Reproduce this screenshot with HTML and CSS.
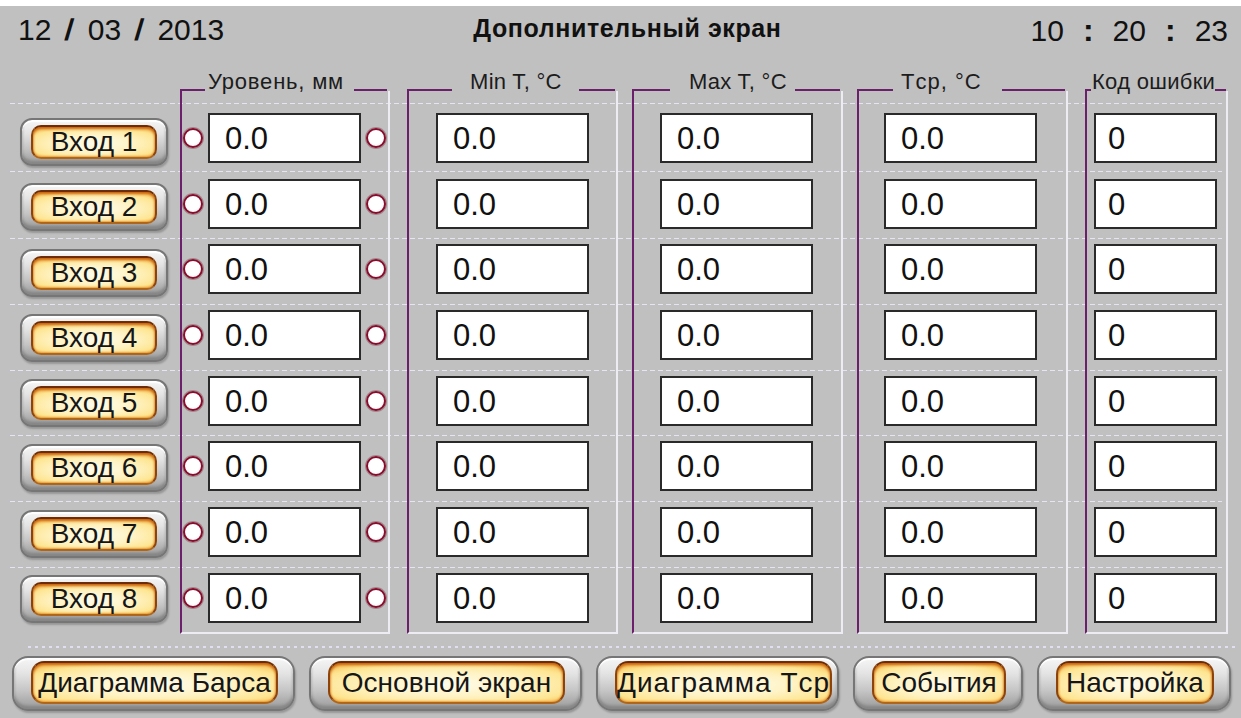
FILE: index.html
```html
<!DOCTYPE html>
<html lang="ru">
<head>
<meta charset="utf-8">
<title>Дополнительный экран</title>
<link rel="stylesheet" href="styles.css">
</head>
<body>
<div class="screen">
  <header class="top">
    <div class="date"><span>12</span><b class="sep">/</b><span>03</span><b class="sep">/</b><span>2013</span></div>
    <h1 class="title">Дополнительный экран</h1>
    <div class="clock"><span>10</span><b class="colon">:</b><span>20</span><b class="colon">:</b><span>23</span></div>
  </header>

  <main class="table">
    <div class="inputs">
      <button class="btn small"><span class="pill">Вход 1</span></button>
      <button class="btn small"><span class="pill">Вход 2</span></button>
      <button class="btn small"><span class="pill">Вход 3</span></button>
      <button class="btn small"><span class="pill">Вход 4</span></button>
      <button class="btn small"><span class="pill">Вход 5</span></button>
      <button class="btn small"><span class="pill">Вход 6</span></button>
      <button class="btn small"><span class="pill">Вход 7</span></button>
      <button class="btn small"><span class="pill">Вход 8</span></button>
    </div>

    <section class="group g-level">
      <div class="cap"><i class="seg"></i><span class="label">Уровень, мм</span><i class="seg fill"></i></div>
      <div class="frame">
        <div class="row"><i class="led"></i><span class="val">0.0</span><i class="led"></i></div>
        <div class="row"><i class="led"></i><span class="val">0.0</span><i class="led"></i></div>
        <div class="row"><i class="led"></i><span class="val">0.0</span><i class="led"></i></div>
        <div class="row"><i class="led"></i><span class="val">0.0</span><i class="led"></i></div>
        <div class="row"><i class="led"></i><span class="val">0.0</span><i class="led"></i></div>
        <div class="row"><i class="led"></i><span class="val">0.0</span><i class="led"></i></div>
        <div class="row"><i class="led"></i><span class="val">0.0</span><i class="led"></i></div>
        <div class="row"><i class="led"></i><span class="val">0.0</span><i class="led"></i></div>
      </div>
    </section>

    <section class="group g-min">
      <div class="cap"><i class="seg"></i><span class="label">Min T, °C</span><i class="seg fill"></i></div>
      <div class="frame">
        <div class="row"><span class="val">0.0</span></div>
        <div class="row"><span class="val">0.0</span></div>
        <div class="row"><span class="val">0.0</span></div>
        <div class="row"><span class="val">0.0</span></div>
        <div class="row"><span class="val">0.0</span></div>
        <div class="row"><span class="val">0.0</span></div>
        <div class="row"><span class="val">0.0</span></div>
        <div class="row"><span class="val">0.0</span></div>
      </div>
    </section>

    <section class="group g-max">
      <div class="cap"><i class="seg"></i><span class="label">Max T, °C</span><i class="seg fill"></i></div>
      <div class="frame">
        <div class="row"><span class="val">0.0</span></div>
        <div class="row"><span class="val">0.0</span></div>
        <div class="row"><span class="val">0.0</span></div>
        <div class="row"><span class="val">0.0</span></div>
        <div class="row"><span class="val">0.0</span></div>
        <div class="row"><span class="val">0.0</span></div>
        <div class="row"><span class="val">0.0</span></div>
        <div class="row"><span class="val">0.0</span></div>
      </div>
    </section>

    <section class="group g-avg">
      <div class="cap"><i class="seg"></i><span class="label">Tср, °C</span><i class="seg fill"></i></div>
      <div class="frame">
        <div class="row"><span class="val">0.0</span></div>
        <div class="row"><span class="val">0.0</span></div>
        <div class="row"><span class="val">0.0</span></div>
        <div class="row"><span class="val">0.0</span></div>
        <div class="row"><span class="val">0.0</span></div>
        <div class="row"><span class="val">0.0</span></div>
        <div class="row"><span class="val">0.0</span></div>
        <div class="row"><span class="val">0.0</span></div>
      </div>
    </section>

    <section class="group g-err">
      <div class="cap"><i class="seg"></i><span class="label">Код ошибки</span><i class="seg fill"></i></div>
      <div class="frame">
        <div class="row"><span class="val">0</span></div>
        <div class="row"><span class="val">0</span></div>
        <div class="row"><span class="val">0</span></div>
        <div class="row"><span class="val">0</span></div>
        <div class="row"><span class="val">0</span></div>
        <div class="row"><span class="val">0</span></div>
        <div class="row"><span class="val">0</span></div>
        <div class="row"><span class="val">0</span></div>
      </div>
    </section>
  </main>

  <div class="divider"></div>

  <nav class="bottom">
    <button class="btn big b-bars"><span class="pill">Диаграмма Барса</span></button>
    <button class="btn big b-main"><span class="pill">Основной экран</span></button>
    <button class="btn big b-avg"><span class="pill">Диаграмма Tср</span></button>
    <button class="btn big b-events"><span class="pill">События</span></button>
    <button class="btn big b-setup"><span class="pill">Настройка</span></button>
  </nav>
</div>
</body>
</html>
```

FILE: styles.css
```css
* { box-sizing: border-box; }

body {
  margin: 0;
  background: #ffffff;
  font-family: "Liberation Sans", Arial, sans-serif;
  color: #141414;
}

.screen {
  margin-top: 6px;
  height: 712px;
  background: #c0c0c0;
  display: flex;
  flex-direction: column;
}

/* ---------- header: date, title, clock ---------- */
.top {
  height: 64px;
  display: flex;
  justify-content: space-between;
  align-items: flex-start;
  padding: 7px 13px 0 18px;
}

.date, .clock {
  display: flex;
  align-items: baseline;
  font-size: 30px;
  line-height: 34px;
  color: #111;
}

.date { gap: 14px; }
.clock { gap: 19px; }

.sep { font-weight: bold; transform: skewX(-6deg); }
.colon { font-weight: 900; font-size: 32px; }

.title {
  margin: 0;
  font-size: 25px;
  font-weight: bold;
  line-height: 28px;
  letter-spacing: 0.6px;
  padding-top: 1px;
  color: #111;
}

/* ---------- measurement table ---------- */
.table {
  height: 564px;
  display: flex;
  padding-left: 20px;
  background-image:
    repeating-linear-gradient(to right, #e6e4f0 0 5px, transparent 5px 8px),
    repeating-linear-gradient(to right, #e6e4f0 0 5px, transparent 5px 8px),
    repeating-linear-gradient(to right, #e6e4f0 0 5px, transparent 5px 8px),
    repeating-linear-gradient(to right, #e6e4f0 0 5px, transparent 5px 8px),
    repeating-linear-gradient(to right, #e6e4f0 0 5px, transparent 5px 8px),
    repeating-linear-gradient(to right, #e6e4f0 0 5px, transparent 5px 8px),
    repeating-linear-gradient(to right, #e6e4f0 0 5px, transparent 5px 8px),
    repeating-linear-gradient(to right, #e6e4f0 0 5px, transparent 5px 8px);
  background-size: 1212px 1px;
  background-repeat: no-repeat;
  background-position:
    10px 33px, 10px 101px, 10px 168px, 10px 234px,
    10px 300px, 10px 365px, 10px 431px, 10px 497px;
}

.inputs {
  width: 148px;
  margin-right: 12px;
  padding-top: 48px;
  display: flex;
  flex-direction: column;
  gap: 17.3px;
}

.group {
  display: flex;
  flex-direction: column;
  width: 211px;
}

.g-level { width: 210px; }
.g-min { margin-left: 17px; }
.g-max, .g-avg { margin-left: 14px; }
.g-err { margin-left: 17px; width: 143px; }

/* caption sitting on the top edge of the frame */
.cap {
  height: 21px;
  display: flex;
  align-items: flex-end;
}

.seg {
  display: block;
  height: 2px;
  background: #6c1f6a;
}

.seg.fill { flex: 1; margin-right: 3px; }

.label {
  font-size: 22px;
  line-height: 18px;
  color: #1c1c1c;
  white-space: nowrap;
  letter-spacing: 0.3px;
}

.g-level .seg:first-child { width: 25px; }
.g-level .label { padding: 0 10px 0 3px; letter-spacing: 0.8px; }

.g-min .seg:first-child { width: 45px; }
.g-min .label { padding: 0 17px 0 18px; }

.g-max .seg:first-child { width: 38px; }
.g-max .label { padding: 0 8px 0 19px; }

.g-avg .seg:first-child { width: 36px; }
.g-avg .label { padding: 0 20px 0 8px; letter-spacing: 1px; }

.g-err .seg:first-child { width: 6px; }
.g-err .label { padding: 0 0 0 1px; }
.g-err .seg.fill { margin-right: 2px; }

.frame {
  flex: 1;
  border-left: 2px solid #6c1f6a;
  border-right: 2px solid #ececf2;
  border-bottom: 2px solid #ececf2;
  padding-top: 22px;
  display: flex;
  flex-direction: column;
  gap: 15.7px;
}

.row {
  height: 50px;
  display: flex;
  align-items: center;
}

.g-level .row { padding-left: 1px; }
.g-min .row { padding-left: 27px; }
.g-max .row { padding-left: 26px; }
.g-avg .row { padding-left: 25px; }
.g-err .row { padding-left: 7px; }

.val {
  width: 153px;
  height: 50px;
  background: #ffffff;
  border: 2px solid #2a2a2a;
  font-size: 31px;
  line-height: 48px;
  padding-left: 15px;
  color: #111;
}

.g-level .val { margin: 0 5px; }
.g-err .val { width: 123px; padding-left: 12px; }

.led {
  display: block;
  width: 20px;
  height: 20px;
  border-radius: 50%;
  border: 2px solid #8a0c2c;
  background: radial-gradient(circle at 45% 40%, #ffffff 55%, #ece6ea 100%);
  box-shadow: 0 0 0 1px rgba(90, 0, 20, 0.3);
}

/* ---------- dotted separator ---------- */
.divider {
  height: 2px;
  margin: 12px 5px 0 28px;
  background: repeating-linear-gradient(to right, #e2def2 0 3px, transparent 3px 7px);
}

/* ---------- buttons: silver bezel with a golden glowing face ---------- */
.btn {
  display: flex;
  align-items: stretch;
  justify-content: stretch;
  margin: 0;
  font-family: inherit;
  color: #161616;
  cursor: pointer;
  background: linear-gradient(to bottom, #f6f6f6 0%, #e4e4e4 30%, #c4c4c4 65%, #9a9a9a 100%);
  border: 2px solid #767676;
  box-shadow: inset 0 2px 1px #ffffff, inset 0 -3px 3px #858585, 1px 2px 2px rgba(0, 0, 0, 0.22);
}

.pill {
  flex: 1;
  display: flex;
  align-items: center;
  justify-content: center;
  white-space: nowrap;
  border: 2px solid #8e430a;
  border-top-color: #6e2c06;
  border-bottom-color: #b0661a;
  background:
    radial-gradient(ellipse 82% 78% at 50% 55%, #fffbea 0%, #fff3c4 40%, #fde592 68%, #f7bd52 88%, #e8901e 100%);
  box-shadow: inset 0 2px 3px #c85c06, inset 0 -1px 2px #eaa03a;
}

.btn.small {
  width: 148px;
  height: 48px;
  border-radius: 12px;
  padding: 5px 9px 5px 9px;
}

.btn.small .pill {
  border-radius: 10px;
  font-size: 28px;
  line-height: 30px;
}

.bottom {
  display: flex;
  gap: 14px;
  padding-left: 12px;
  margin-top: 8px;
}

.btn.big {
  height: 55px;
  border-radius: 16px;
  padding: 3px 15px 5px 17px;
}

.btn.big .pill {
  border-radius: 13px;
  font-size: 28px;
  line-height: 30px;
}

.b-bars { width: 283px; }
.b-main { width: 273px; }
.b-avg { width: 243px; }
.b-avg .pill { letter-spacing: 1px; }
.b-events { width: 170px; }
.b-setup { width: 194px; }
```
